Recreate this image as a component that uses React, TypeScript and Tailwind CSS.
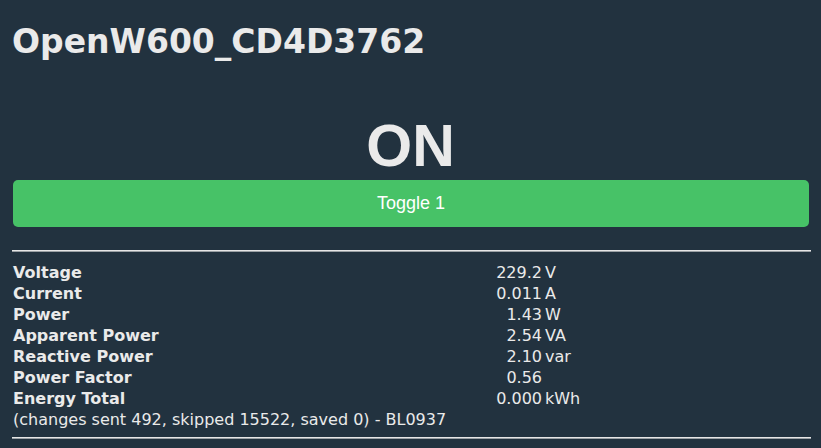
import React from "react";

const rows: { label: string; value: string; unit: string }[] = [
  { label: "Voltage", value: "229.2", unit: "V" },
  { label: "Current", value: "0.011", unit: "A" },
  { label: "Power", value: "1.43", unit: "W" },
  { label: "Apparent Power", value: "2.54", unit: "VA" },
  { label: "Reactive Power", value: "2.10", unit: "var" },
  { label: "Power Factor", value: "0.56", unit: "" },
  { label: "Energy Total", value: "0.000", unit: "kWh" },
];

export default function App() {
  return (
    <div className="min-h-[448px] w-full bg-[#22323f] text-[#eaeaea] px-3 font-['DejaVu_Sans',sans-serif]">
      <h2 className="pt-[23px] text-[33px] font-bold leading-[38px]">OpenW600_CD4D3762</h2>

      <div className="mt-[52px] text-center font-['Liberation_Sans',Arial,sans-serif] text-[59px] font-bold leading-[66px]">
        ON
      </div>

      <button className="mt-px ml-px w-[796px] h-[47px] rounded-[5px] bg-[#47c267] text-white font-['Liberation_Sans',Arial,sans-serif] text-[18px]">
        Toggle 1
      </button>

      <div className="mt-[23px] w-[799px] border-t border-b border-t-[#e6e6e6] border-b-[#9aa0a4]" />

      <div className="mt-[10px] pl-px text-[16px] leading-[21px]">
        {rows.map((r) => (
          <div key={r.label} className="flex">
            <div className="w-[483px] font-bold">{r.label}</div>
            <div className="w-[46px] text-right">{r.value}</div>
            <div className="pl-[3px]">{r.unit}</div>
          </div>
        ))}
        <div>(changes sent 492, skipped 15522, saved 0) - BL0937</div>
      </div>

      <div className="mt-[7px] w-[799px] border-t border-b border-t-[#e6e6e6] border-b-[#9aa0a4]" />
    </div>
  );
}
